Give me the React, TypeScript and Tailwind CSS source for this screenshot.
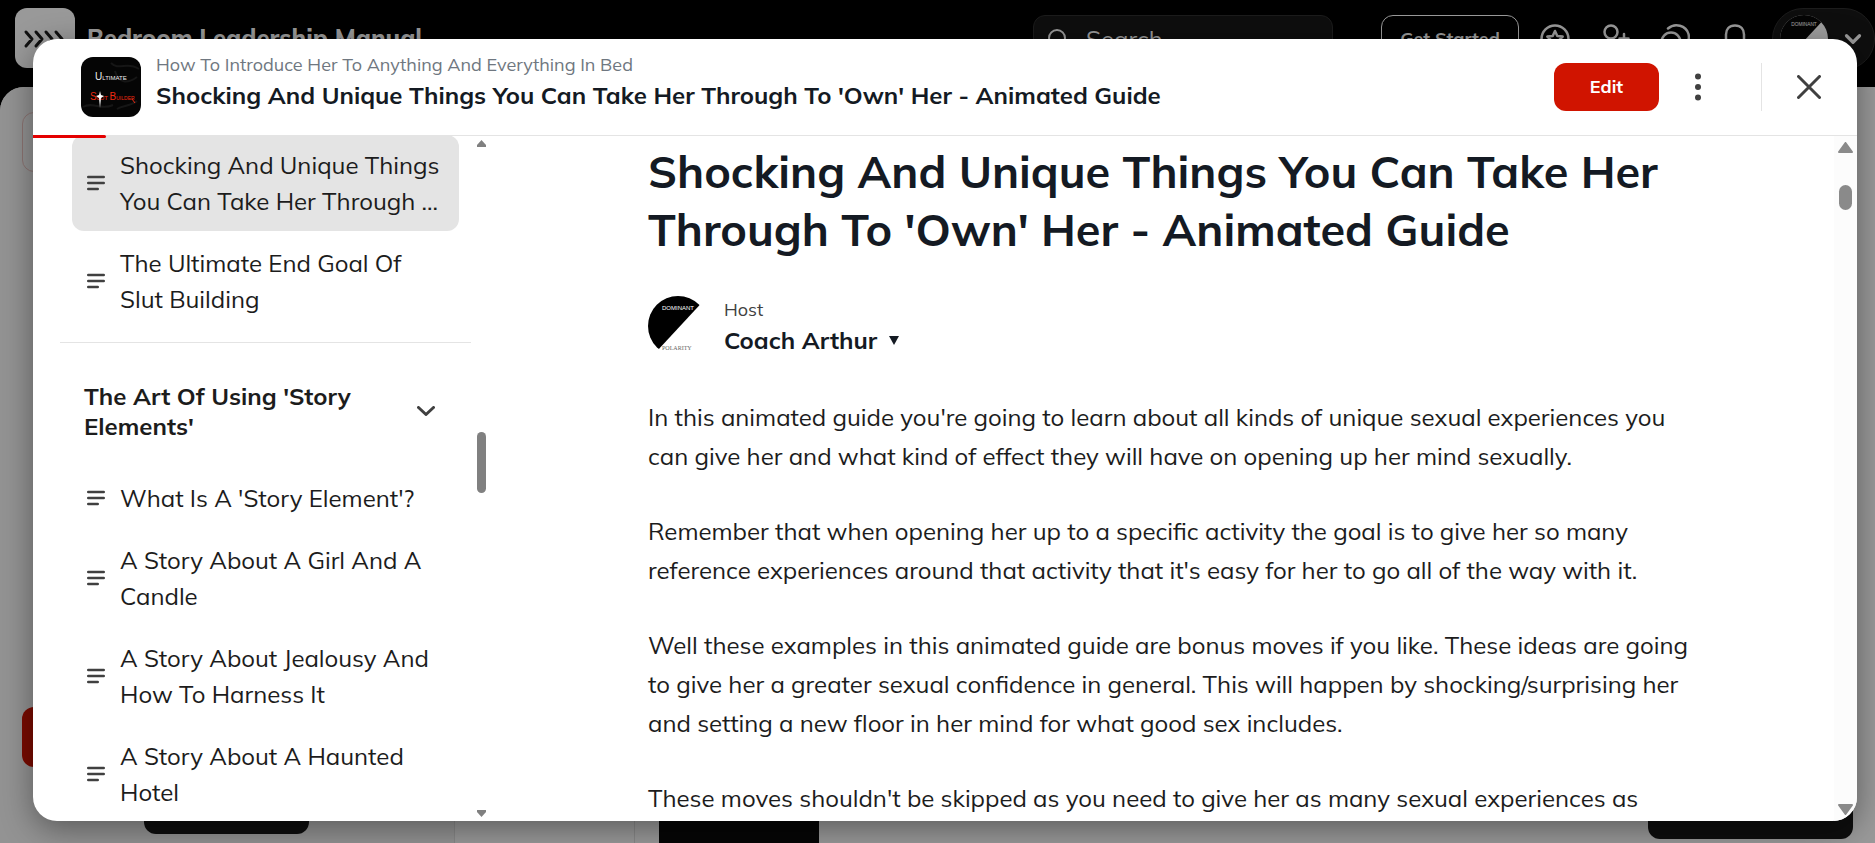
import type { ReactNode } from 'react';
import { ChevronDown, Search } from 'lucide-react';

const lessonsBefore = [
    { title: 'Shocking And Unique Things You Can Take Her Through ...', active: true },
    { title: 'The Ultimate End Goal Of Slut Building', active: false },
];

const storyLessons = [
    { title: "What Is A 'Story Element'?", active: false },
    { title: 'A Story About A Girl And A Candle', active: false },
    { title: 'A Story About Jealousy And How To Harness It', active: false },
    { title: 'A Story About A Haunted Hotel', active: false },
];

const paragraphs = [
    "In this animated guide you're going to learn about all kinds of unique sexual experiences you can give her and what kind of effect they will have on opening up her mind sexually.",
    "Remember that when opening her up to a specific activity the goal is to give her so many reference experiences around that activity that it's easy for her to go all of the way with it.",
    'Well these examples in this animated guide are bonus moves if you like. These ideas are going to give her a greater sexual confidence in general. This will happen by shocking/surprising her and setting a new floor in her mind for what good sex includes.',
    "These moves shouldn't be skipped as you need to give her as many sexual experiences as",
];

function IconButton({ label, children }: { label: string; children: ReactNode }) {
    return (
        <button type="button" aria-label={label} className="flex h-8 w-8 items-center justify-center">
            {children}
        </button>
    );
}

function DominantAvatar({ className }: { className: string }) {
    return (
        <svg viewBox="0 0 60 60" className={className} aria-hidden="true">
            <defs>
                <clipPath id="avatar-clip">
                    <circle cx="30" cy="30" r="30" />
                </clipPath>
            </defs>
            <g clipPath="url(#avatar-clip)">
                <rect width="60" height="60" fill="#fff" />
                <path d="M-4 0H60L9 55L-4 69Z" fill="#000" />
                <text x="14" y="14" fontSize="6" fill="#fff" fontFamily="Liberation Sans">
                    DOMINANT
                </text>
                <text x="14" y="54" fontSize="6" fill="#666" fontFamily="Liberation Serif">
                    POLARITY
                </text>
            </g>
        </svg>
    );
}

function CourseLogo() {
    return (
        <svg viewBox="0 0 60 60" className="h-[60px] w-[60px] shrink-0 rounded-xl bg-[#050505]" aria-hidden="true">
            <path
                d="M30 6c8 8 16-2 28 6M34 14c4 14 14 12 22 6M2 50c10-6 18 4 30-2M36 52c6-4 12-2 20-8"
                fill="none"
                stroke="#161616"
                strokeWidth="2"
            />
            <text x="14" y="23" fontSize="10" fill="#eee" fontFamily="Liberation Sans">
                U<tspan fontSize="6">LTIMATE</tspan>
            </text>
            <text x="9" y="43" fontSize="10" fill="#f02a10" fontFamily="Liberation Sans">
                S<tspan fontSize="6">LUT </tspan>B<tspan fontSize="5">UILDER</tspan>
            </text>
            <path d="M19 34l1 4 3 1-3 2-1 10-1-10-3-2 3-1z" fill="#fff" />
            <path d="M51 42l3 4" stroke="#f02a10" />
        </svg>
    );
}

function LessonLink({ title, active }: { title: string; active: boolean }) {
    return (
        <a
            href="#"
            className={`flex items-center gap-[15px] rounded-xl px-[15px] py-3 text-2xl leading-9 text-[#1c1c1c] ${active ? 'bg-[#e4e4e4]' : ''}`}
        >
            <svg viewBox="0 0 18 16" className="h-4 w-[18px] shrink-0" aria-hidden="true">
                <path d="M1.2 2h15.6M1.2 8h15.6M1.2 14h9.6" stroke="#404040" strokeWidth="2.4" strokeLinecap="round" />
            </svg>
            <span>{title}</span>
        </a>
    );
}

function Backdrop() {
    return (
        <div className="flex h-full flex-col bg-black" aria-hidden="true">
            <header className="flex h-[87px] shrink-0 items-start justify-between pt-2 pl-[15px]">
                <div className="flex items-center gap-3">
                    <svg viewBox="0 0 60 60" className="h-[60px] w-[60px] rounded-xl bg-[#999]">
                        <path
                            d="M11 24l6 7-6 7M21 24l6 7-6 7M31 24l6 7-6 7M41 24l6 7-6 7"
                            fill="none"
                            stroke="#111"
                            strokeWidth="3"
                            strokeLinecap="round"
                            strokeLinejoin="round"
                        />
                    </svg>
                    <span className="text-2xl font-extrabold text-[#999]">Bedroom Leadership Manual</span>
                </div>
                <div className="flex items-center">
                    <div className="mr-12 flex h-12 w-[300px] items-center gap-4 rounded-xl border border-[#1c1c1c] bg-[#0e0e0e] px-3 text-[#999]">
                        <Search size={24} />
                        <span className="text-2xl">Search</span>
                    </div>
                    <span className="mr-5 flex h-12 w-[138px] items-center justify-center rounded-xl border border-[#999] text-lg font-bold text-[#999]">
                        Get Started
                    </span>
                    <div className="mr-[21px] flex gap-7 text-[#999]">
                        <IconButton label="Points">
                            <svg viewBox="0 0 30 30" className="h-[30px] w-[30px]" fill="none" stroke="currentColor" strokeWidth="2.5" strokeLinejoin="round">
                                <circle cx="15" cy="15" r="13.5" />
                                <path d="M15 7l2.3 5 5.4.6-4 3.7 1.1 5.4-4.8-2.7-4.8 2.7 1.1-5.4-4-3.7 5.4-.6z" />
                            </svg>
                        </IconButton>
                        <IconButton label="Invite">
                            <svg viewBox="0 0 30 30" className="h-[30px] w-[30px]" fill="none" stroke="currentColor" strokeWidth="2.5" strokeLinecap="round">
                                <circle cx="11" cy="8" r="6.5" />
                                <path d="M1.5 27c0-6 4-9 9.5-9 3 0 5 1 7 2M24 10v9M19.5 14.5h9" />
                            </svg>
                        </IconButton>
                        <IconButton label="Chat">
                            <svg viewBox="0 0 30 30" className="h-[30px] w-[30px]" fill="none" stroke="currentColor" strokeWidth="2.5" strokeLinecap="round">
                                <path d="M8 4.5c7-6 18-3 20.5 5.5 1 4 0 8-2 11l1 5-5-1" />
                                <circle cx="11" cy="18" r="9.5" />
                            </svg>
                        </IconButton>
                        <IconButton label="Notifications">
                            <svg viewBox="0 0 30 30" className="h-[30px] w-[30px]" fill="none" stroke="currentColor" strokeWidth="2.5" strokeLinejoin="round">
                                <path d="M15 1.5c-6 0-9 4-9 9v6l-3 6h24l-3-6v-6c0-5-3-9-9-9zM12 26h6" />
                            </svg>
                        </IconButton>
                    </div>
                    <div className="flex h-[62px] w-[103px] items-center gap-3 rounded-full border border-[#1c1c1c] bg-[#0e0e0e] pl-[7px]">
                        <DominantAvatar className="h-12 w-12 opacity-60" />
                        <ChevronDown size={26} strokeWidth={3} className="text-[#999]" />
                    </div>
                </div>
            </header>
            <div className="flex min-h-0 flex-1 rounded-tl-3xl bg-[#999]">
                <div className="flex w-[455px] shrink-0 flex-col justify-between rounded-tl-3xl border-r border-[#888] bg-[#939393] pt-[25px] pb-[9px] pl-[22px]">
                    <div className="h-[60px] w-[300px] rounded-xl border border-[#8c7472]" />
                    <div className="flex flex-col gap-[7px]">
                        <div className="h-[60px] w-[300px] rounded-xl bg-[#7a0b00]" />
                        <div className="ml-[122px] h-[60px] w-[165px] rounded-xl bg-[#0e0e0e]" />
                    </div>
                </div>
                <div className="w-[180px] shrink-0 border-r border-[#888]" />
                <div className="flex flex-1 items-end justify-between pr-[22px] pl-[24px]">
                    <div className="h-20 w-[160px] bg-[#060606]" />
                    <div className="mb-1 h-[60px] w-[205px] rounded-xl bg-[#0e0e0e]" />
                </div>
            </div>
        </div>
    );
}

export default function App() {
    return (
        <div className="relative h-screen overflow-hidden font-['Mulish','Lato',sans-serif]">
            <Backdrop />
            <div className="absolute inset-0 flex pt-[39px] pr-[18px] pb-[22px] pl-[33px]">
                <div
                    role="dialog"
                    aria-label="Lesson"
                    className="flex min-w-0 flex-1 flex-col overflow-hidden rounded-3xl bg-white shadow-[0_8px_32px_rgba(0,0,0,0.4)]"
                >
                    <header className="relative flex h-[97px] shrink-0 items-center gap-[15px] border-b border-[#e4e4e4] pr-6 pl-12">
                        <CourseLogo />
                        <div className="flex-1 pb-3">
                            <p className="text-lg leading-7 text-[#6f7780]">How To Introduce Her To Anything And Everything In Bed</p>
                            <p className="text-2xl leading-8 font-bold text-[#141a23]">
                                Shocking And Unique Things You Can Take Her Through To 'Own' Her - Animated Guide
                            </p>
                        </div>
                        <button type="button" className="h-12 w-[105px] rounded-xl bg-[#d01400] text-lg font-bold text-white">
                            Edit
                        </button>
                        <button type="button" aria-label="More options" className="flex h-12 w-12 items-center justify-center">
                            <svg viewBox="0 0 6 28" className="h-7 w-[6px]" fill="#404040">
                                <circle cx="3" cy="3.5" r="3" />
                                <circle cx="3" cy="14" r="3" />
                                <circle cx="3" cy="24.5" r="3" />
                            </svg>
                        </button>
                        <div className="ml-6 h-12 w-px bg-[#e4e4e4]" />
                        <button type="button" aria-label="Close" className="ml-2 flex h-12 w-12 items-center justify-center">
                            <svg viewBox="0 0 24 24" className="h-6 w-6">
                                <path d="M1.5 1.5l21 21M22.5 1.5l-21 21" stroke="#404040" strokeWidth="3" strokeLinecap="round" />
                            </svg>
                        </button>
                        <div className="absolute -bottom-[3px] left-0 h-[3px] w-[73px] rounded-r bg-[#e40000]" />
                    </header>

                    <div className="-mt-px flex min-h-0 flex-1">
                        <aside className="flex w-[475px] shrink-0">
                            <nav className="flex w-[438px] flex-col overflow-hidden pl-[27px]">
                                <div className="flex flex-col gap-[2px] px-3">
                                    {lessonsBefore.map((lesson) => (
                                        <LessonLink key={lesson.title} {...lesson} />
                                    ))}
                                </div>
                                <div className="mt-[13px] h-px shrink-0 bg-[#e4e4e4]" />
                                <button
                                    type="button"
                                    className="mt-[38px] flex items-center justify-between pr-9 pl-6 text-left text-2xl leading-[30px] font-bold text-[#1c1c1c]"
                                >
                                    <span className="w-[280px]">The Art Of Using 'Story Elements'</span>
                                    <svg viewBox="0 0 18 10" className="h-[10px] w-[18px]" fill="none" stroke="#404040" strokeWidth="3" strokeLinecap="round" strokeLinejoin="round">
                                        <path d="M1.5 1.5L9 8.5l7.5-7" />
                                    </svg>
                                </button>
                                <div className="mt-[27px] flex flex-col gap-[2px] px-3">
                                    {storyLessons.map((lesson) => (
                                        <LessonLink key={lesson.title} {...lesson} />
                                    ))}
                                </div>
                            </nav>
                            <div className="ml-[6px] flex w-[9px] flex-col pt-[5px] pb-1" aria-hidden="true">
                                <svg viewBox="0 0 9 7" className="h-[7px] w-[9px]">
                                    <path d="M4.5 0L9 5v2H0V5z" fill="#808080" />
                                </svg>
                                <div className="mt-[285px] h-[61px] rounded-full bg-[#808080]" />
                                <svg viewBox="0 0 9 7" className="mt-auto h-[7px] w-[9px]">
                                    <path d="M4.5 7L9 2V0H0v2z" fill="#808080" />
                                </svg>
                            </div>
                        </aside>

                        <main className="flex min-w-0 flex-1 justify-center overflow-hidden px-6">
                            <article className="w-full max-w-[1046px] pt-[7px] text-[#141a23]">
                                <h1 className="text-[45px] leading-[58px] font-bold">
                                    Shocking And Unique Things You Can Take Her Through To 'Own' Her - Animated Guide
                                </h1>
                                <div className="mt-[38px] flex items-center gap-4">
                                    <DominantAvatar className="h-[60px] w-[60px]" />
                                    <div>
                                        <p className="text-lg leading-7 text-[#404040]">Host</p>
                                        <button type="button" className="flex items-center gap-3 text-2xl leading-8 font-bold">
                                            Coach Arthur
                                            <svg viewBox="0 0 10 9" className="h-[9px] w-[10px]">
                                                <path d="M0 0h10L5 9z" fill="#141a23" />
                                            </svg>
                                        </button>
                                    </div>
                                </div>
                                <div className="mt-[42px] flex flex-col gap-9 text-2xl leading-[39px] text-[#1c1c1c]">
                                    {paragraphs.map((text) => (
                                        <p key={text}>{text}</p>
                                    ))}
                                </div>
                            </article>
                        </main>

                        <div className="flex w-[23px] shrink-0 flex-col items-center bg-[#fcfcfc] pt-[7px] pb-[6px]" aria-hidden="true">
                            <svg viewBox="0 0 15 11" className="h-[11px] w-[15px]">
                                <path d="M7.5 1L14 10H1z" fill="#8a8a8a" stroke="#8a8a8a" strokeWidth="2" strokeLinejoin="round" />
                            </svg>
                            <div className="mt-8 h-[25px] w-[13px] rounded-full bg-[#8a8a8a]" />
                            <svg viewBox="0 0 15 11" className="mt-auto h-[11px] w-[15px]">
                                <path d="M7.5 10L14 1H1z" fill="#8a8a8a" stroke="#8a8a8a" strokeWidth="2" strokeLinejoin="round" />
                            </svg>
                        </div>
                    </div>
                </div>
            </div>
        </div>
    );
}
